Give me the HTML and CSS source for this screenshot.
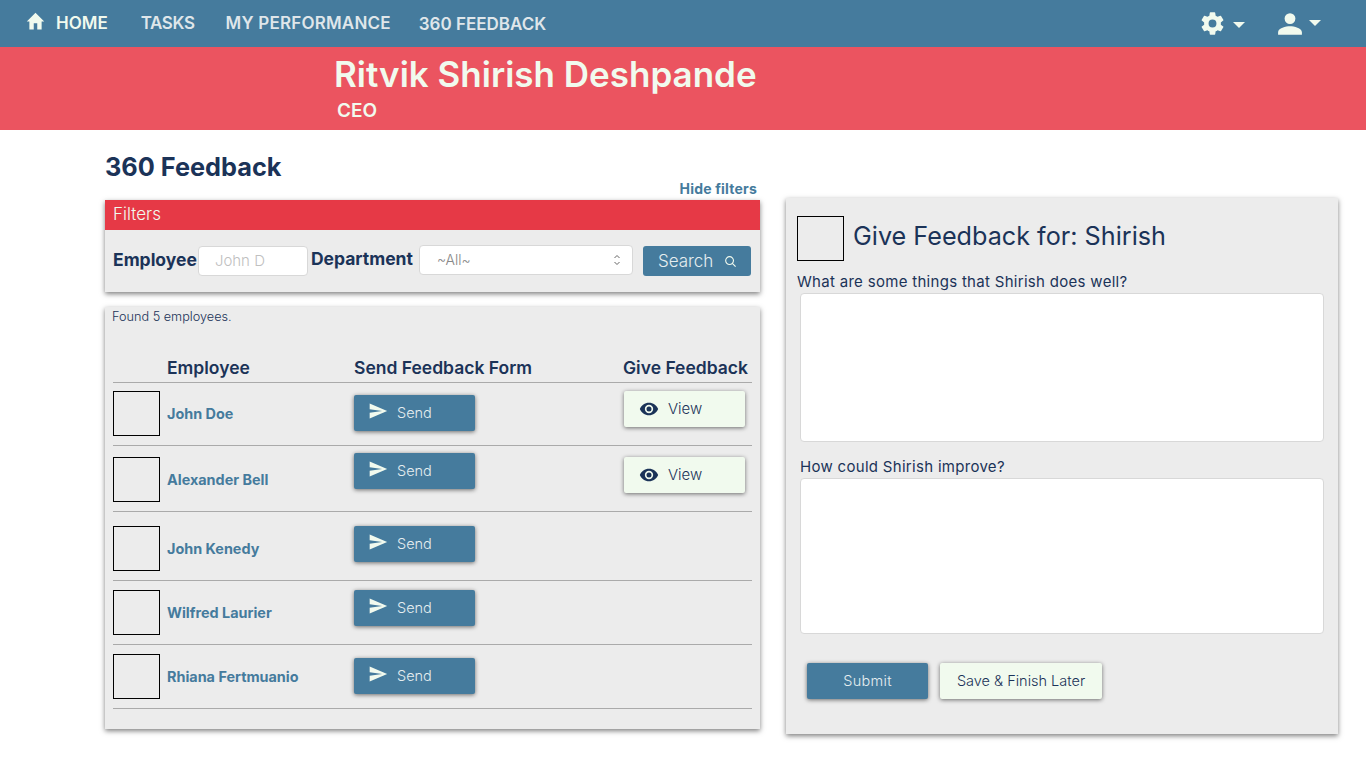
FILE: index.html
```html
<!DOCTYPE html>
<html lang="en">
<head>
  <meta charset="UTF-8" />
  <title>360 Feedback</title>
  <link rel="stylesheet" href="styles.css">
</head>
<body>
  <nav class="navbar">
    <svg class="home-icon" viewBox="0 0 24 24"><path d="M10 21v-7h4v7h5v-9h3L12 2 2 12h3v9z"/></svg>
    <a class="nav-link nav-home">HOME</a>
    <a class="nav-link nav-tasks">TASKS</a>
    <a class="nav-link nav-perf">MY PERFORMANCE</a>
    <a class="nav-link nav-360">360 FEEDBACK</a>
    <div class="nav-right">
      <svg class="nav-icon gear-icon" viewBox="0 0 24 24"><path d="M19.4 13a7.5 7.5 0 0 0 0-2l2.1-1.6a.5.5 0 0 0 .1-.7l-2-3.4a.5.5 0 0 0-.6-.2l-2.5 1a7.3 7.3 0 0 0-1.7-1l-.4-2.7a.5.5 0 0 0-.5-.4h-3.8a.5.5 0 0 0-.5.4l-.4 2.7c-.6.2-1.200.6-1.700 1l-2.500-1a.5.5 0 0 0-.6.2l-2 3.400a.5.5 0 0 0 .1.700L4.600 11a7.500 7.500 0 0 0 0 2l-2.100 1.600a.5.5 0 0 0-.1.700l2 3.400c.1.200.4.300.6.200l2.500-1c.5.400 1.100.800 1.700 1l.4 2.700c0 .2.200.4.500.4h3.800c.3 0 .5-.2.500-.4l.4-2.700c.6-.2 1.200-.6 1.700-1l2.500 1c.2.100.5 0 .6-.2l2-3.400a.5.5 0 0 0-.1-.7zM12 15.500a3.500 3.500 0 1 1 0-7 3.500 3.500 0 0 1 0 7z"/></svg>
      <span class="caret caret-gear"></span>
      <svg class="nav-icon user-icon" viewBox="0 0 24 24"><path d="M12 12a5 5 0 1 0 0-10 5 5 0 0 0 0 10zm0 2c-3.700 0-11 1.800-11 5.500V22h22v-2.500c0-3.700-7.300-5.500-11-5.500z"/></svg>
      <span class="caret caret-user"></span>
    </div>
  </nav>

  <header class="banner">
    <h1>Ritvik Shirish Deshpande</h1>
    <div class="role">CEO</div>
  </header>

  <main class="content">
    <div class="left-col">
      <h2>360 Feedback</h2>
      <div class="hide-filters">Hide filters</div>

      <section class="card filters">
        <div class="filters-head">Filters</div>
        <div class="filters-body">
          <label class="filter-label">Employee</label>
          <div class="text-input">John D</div>
          <label class="filter-label label-dept">Department</label>
          <div class="select-input">~All~
            <svg class="select-arrows" viewBox="0 0 8 14"><path d="M1.500 5 4 2.500 6.500 5M1.500 9 4 11.500 6.500 9"/></svg>
          </div>
          <button class="btn btn-blue btn-search">Search
            <svg class="search-icon" viewBox="0 0 14 14"><circle cx="6" cy="6" r="4.200"/><path d="M9 9l3.500 3.500"/></svg>
          </button>
        </div>
      </section>

      <section class="card results">
        <div class="found">Found 5 employees.</div>
        <div class="table-head">
          <span class="col-employee">Employee</span>
          <span class="col-send">Send Feedback Form</span>
          <span class="col-give">Give Feedback</span>
        </div>

        <div class="row row-1">
          <div class="avatar"></div>
          <a class="emp-name">John Doe</a>
          <button class="btn btn-blue btn-send">
            <svg class="send-icon" viewBox="0 0 24 24"><path d="M2 21l21-9L2 3v7l15 2-15 2z"/></svg>Send
          </button>
          <button class="btn btn-light btn-view">
            <svg class="eye-icon" viewBox="0 0 24 24"><path d="M12 4.500C7 4.500 2.700 7.600 1 12c1.700 4.400 6 7.500 11 7.500s9.300-3.100 11-7.500c-1.700-4.400-6-7.500-11-7.500zM12 17a5 5 0 1 1 0-10 5 5 0 0 1 0 10zm0-8a3 3 0 1 0 0 6 3 3 0 0 0 0-6z"/></svg>View
          </button>
        </div>
        <div class="row row-2">
          <div class="avatar"></div>
          <a class="emp-name">Alexander Bell</a>
          <button class="btn btn-blue btn-send">
            <svg class="send-icon" viewBox="0 0 24 24"><path d="M2 21l21-9L2 3v7l15 2-15 2z"/></svg>Send
          </button>
          <button class="btn btn-light btn-view">
            <svg class="eye-icon" viewBox="0 0 24 24"><path d="M12 4.500C7 4.500 2.700 7.600 1 12c1.700 4.400 6 7.500 11 7.500s9.300-3.100 11-7.500c-1.700-4.400-6-7.500-11-7.500zM12 17a5 5 0 1 1 0-10 5 5 0 0 1 0 10zm0-8a3 3 0 1 0 0 6 3 3 0 0 0 0-6z"/></svg>View
          </button>
        </div>
        <div class="row row-3">
          <div class="avatar"></div>
          <a class="emp-name">John Kenedy</a>
          <button class="btn btn-blue btn-send">
            <svg class="send-icon" viewBox="0 0 24 24"><path d="M2 21l21-9L2 3v7l15 2-15 2z"/></svg>Send
          </button>
        </div>
        <div class="row row-4">
          <div class="avatar"></div>
          <a class="emp-name">Wilfred Laurier</a>
          <button class="btn btn-blue btn-send">
            <svg class="send-icon" viewBox="0 0 24 24"><path d="M2 21l21-9L2 3v7l15 2-15 2z"/></svg>Send
          </button>
        </div>
        <div class="row row-5">
          <div class="avatar"></div>
          <a class="emp-name">Rhiana Fertmuanio</a>
          <button class="btn btn-blue btn-send">
            <svg class="send-icon" viewBox="0 0 24 24"><path d="M2 21l21-9L2 3v7l15 2-15 2z"/></svg>Send
          </button>
        </div>
      </section>
    </div>

    <section class="card give-panel">
      <div class="give-head">
        <div class="avatar"></div>
        <h3>Give Feedback for: Shirish</h3>
      </div>
      <div class="question q-first">What are some things that Shirish does well?</div>
      <div class="answer answer-first"></div>
      <div class="question q-second">How could Shirish improve?</div>
      <div class="answer answer-second"></div>
      <div class="give-actions">
        <button class="btn btn-blue btn-submit">Submit</button>
        <button class="btn btn-light btn-save">Save &amp; Finish Later</button>
      </div>
    </section>
  </main>
</body>
</html>
```

FILE: styles.css
```css
* {
  box-sizing: border-box;
}

body {
  margin: 0;
  min-height: 760px;
  font-family: Inter, "Open Sans", sans-serif;
  background: #fff;
  color: #1b3358;
}

/* top nav */
.navbar {
  display: flex;
  align-items: center;
  height: 47px;
  padding-left: 25px;
  background: #457b9d;
}

.home-icon {
  width: 21px;
  height: 21px;
  margin-bottom: 4px;
  fill: #f1faee;
}

.nav-link {
  font-size: 17px;
  font-weight: 600;
  color: #dfe6ea;
  margin-bottom: 1px;
}

.nav-home {
  margin-left: 10px;
  color: #f1faee;
}

.nav-tasks {
  margin-left: 33px;
  letter-spacing: -0.4px;
}

.nav-perf {
  margin-left: 31px;
  letter-spacing: 0.2px;
}

.nav-360 {
  margin-left: 28px;
  margin-bottom: 0;
}

.nav-right {
  display: flex;
  align-items: center;
  margin-left: auto;
  padding-right: 45px;
}

.nav-icon {
  width: 26px;
  height: 26px;
  fill: #f1faee;
}

.gear-icon {
  width: 27px;
  height: 27px;
}

.user-icon {
  margin-left: 32px;
}

.caret {
  width: 0;
  height: 0;
  border-left: 6px solid transparent;
  border-right: 6px solid transparent;
  border-top: 6px solid #f1faee;
}

.caret-gear {
  margin: 3px 0 0 7px;
}

.caret-user {
  margin: 0 0 2px 6px;
}

/* name banner */
.banner {
  height: 83px;
  padding: 7px 0 0 334px;
  background: #eb5460;
  color: #f1faee;
}

.banner h1 {
  margin: 0;
  font-size: 35px;
  line-height: 40px;
  font-weight: 600;
}

.role {
  margin: 6px 0 0 3px;
  font-size: 19px;
  line-height: 22px;
  font-weight: 600;
}

/* page layout */
.content {
  display: flex;
  align-items: flex-start;
  padding-left: 105px;
}

.left-col {
  width: 655px;
  padding-top: 22px;
}

h2 {
  margin: 0;
  font-size: 25.300px;
  line-height: 30px;
  font-weight: 700;
}

.hide-filters {
  margin-bottom: 4px;
  padding-right: 3px;
  text-align: right;
  font-size: 14px;
  line-height: 14px;
  letter-spacing: 0.2px;
  font-weight: 700;
  color: #457b9d;
}

.card {
  background: #ececec;
  box-shadow: 0 2px 5px rgba(0, 0, 0, 0.5);
}

/* filters */
.filters {
  height: 92px;
}

.filters-head {
  height: 30px;
  padding-left: 8px;
  background: #e63946;
  color: #f1faee;
  font-size: 17px;
  font-weight: 300;
  line-height: 29px;
}

.filters-body {
  display: flex;
  align-items: flex-start;
  padding: 15px 0 0 8px;
}

.filter-label {
  font-size: 17.500px;
  font-weight: 700;
  line-height: 30px;
}

.label-dept {
  margin: -1px 0 0 3px;
}

.text-input {
  width: 110px;
  height: 30px;
  margin: 1px 0 0 1px;
  padding-left: 16px;
  background: #fff;
  border: 1px solid #d8d8d8;
  border-radius: 4px;
  font-size: 15px;
  font-weight: 300;
  line-height: 28px;
  color: #c0c0c0;
}

.select-input {
  position: relative;
  width: 214px;
  height: 30px;
  margin-left: 6px;
  padding-left: 17px;
  background: #fff;
  border: 1px solid #d8d8d8;
  border-radius: 4px;
  font-size: 14px;
  font-weight: 300;
  line-height: 27px;
  color: #888;
}

.select-arrows {
  position: absolute;
  right: 11px;
  top: 7px;
  width: 8px;
  height: 14px;
  fill: none;
  stroke: #666;
  stroke-width: 1;
}

.btn {
  display: inline-flex;
  align-items: center;
  border: none;
  border-radius: 2px;
  font-family: inherit;
  font-size: 14.500px;
  font-weight: 300;
  padding: 0;
  box-shadow: 0 1px 4px rgba(0, 0, 0, 0.55);
}

.btn-blue {
  background: #457b9d;
  color: #e6eef0;
}

.btn-light {
  background: #f1faee;
  color: #1b3358;
}

.btn-search {
  width: 108px;
  height: 30px;
  margin: 1px 0 0 10px;
  padding-left: 15px;
  border-radius: 3px;
  font-size: 17px;
  box-shadow: none;
}

.search-icon {
  width: 13px;
  height: 13px;
  margin-left: 11px;
  fill: none;
  stroke: #f1faee;
  stroke-width: 1.200;
}

/* employee table */
.results {
  height: 422px;
  margin-top: 15px;
  padding: 0 8px 0 8px;
}

.found {
  padding-top: 2px;
  margin-left: -1px;
  font-size: 12.700px;
  font-weight: 300;
  line-height: 16px;
}

.table-head {
  display: flex;
  height: 29px;
  margin-top: 29px;
  padding-top: 4px;
  border-bottom: 1px solid #aaa;
  font-size: 17.500px;
  font-weight: 600;
  line-height: 20px;
}

.col-employee {
  margin-left: 54px;
  width: 187px;
}

.col-send {
  width: 269px;
}

.row {
  display: grid;
  grid-template-columns: 54px 187px 270px 121px;
  align-items: start;
  border-bottom: 1px solid #aaa;
}

.row-1 { height: 63px; padding-top: 8px; }
.row-2 { height: 66px; padding-top: 11px; }
.row-3 { height: 69px; padding-top: 14px; }
.row-4 { height: 64px; padding-top: 9px; }
.row-5 { height: 64px; padding-top: 9px; }

.avatar {
  width: 47px;
  height: 45px;
  border: 1px solid #000;
}

.emp-name {
  padding-top: 14px;
  font-size: 14.400px;
  font-weight: 700;
  line-height: 17px;
  color: #457b9d;
}

.btn-send,
.btn-view {
  width: 121px;
  height: 36px;
  padding-bottom: 2px;
}

.row-1 .btn-send { margin-top: 4px; }
.row-2 .btn-send { margin-top: -4px; }
.row-5 .btn-send { margin-top: 4px; }

.btn-send {
  padding-left: 14px;
}

.btn-view {
  padding-left: 15px;
  font-size: 15px;
}

.send-icon {
  width: 20px;
  height: 20px;
  margin: -2px 9px 0 0;
  fill: #f1faee;
}

.eye-icon {
  width: 20px;
  height: 20px;
  margin: 2px 9px 0 0;
  fill: #1b3358;
}

/* right panel */
.give-panel {
  width: 552px;
  height: 536px;
  margin: 68px 0 0 26px;
  padding: 18px 14px 0 11px;
}

.give-head {
  display: flex;
  align-items: center;
}

.give-head h3 {
  margin: 0 0 5px 9px;
  font-size: 25.200px;
  font-weight: 400;
}

.question {
  font-size: 15px;
  letter-spacing: 0.3px;
  line-height: 18px;
}

.q-first {
  margin-top: 12px;
}

.q-second {
  margin: 16px 0 2px 3px;
}

.answer {
  margin: 2px 0 0 3px;
  background: #fff;
  border: 1px solid #d8d8d8;
  border-radius: 4px;
}

.answer-first {
  height: 149px;
}

.answer-second {
  height: 156px;
  margin-top: 0;
}

.give-actions {
  display: flex;
  gap: 12px;
  margin: 29px 0 0 10px;
}

.btn-submit {
  justify-content: center;
  width: 121px;
  height: 36px;
  letter-spacing: 0.3px;
  padding-bottom: 2px;
}

.btn-save {
  justify-content: center;
  width: 162px;
  height: 36px;
  padding-bottom: 2px;
}
```
